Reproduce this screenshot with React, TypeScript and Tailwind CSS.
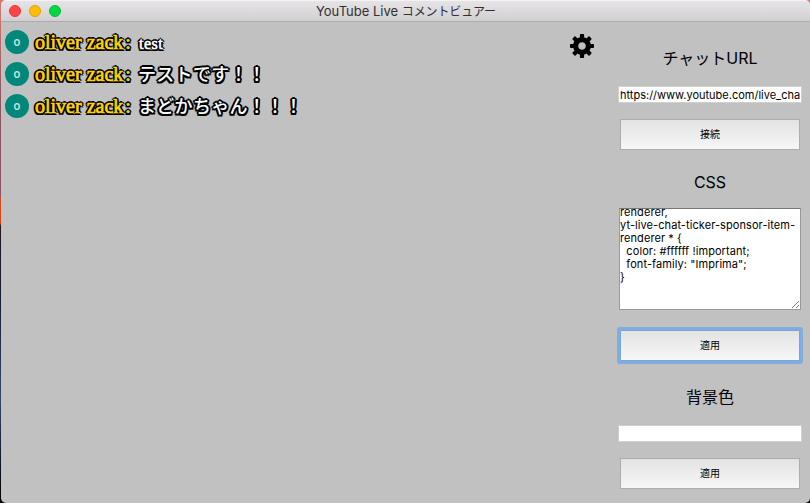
import React from 'react';

const kana = "font-['Noto_Sans_CJK_JP',sans-serif] text-[18px] tracking-[0.3px] font-medium -mt-0.5";

const comments = [
  { id: 1, body: 'test', style: "font-['Liberation_Serif',serif] text-[16px] tracking-[0.5px] mt-[3px] ml-px [-webkit-text-stroke:0.6px_#fff]" },
  { id: 2, body: 'テストです！！', style: kana },
  { id: 3, body: 'まどかちゃん！！！', style: kana },
];

const outline = '[text-shadow:2px_0_#000,-2px_0_#000,0_2px_#000,0_-2px_#000,1.5px_1.5px_#000,-1.5px_1.5px_#000,1.5px_-1.5px_#000,-1.5px_-1.5px_#000,1px_0_#000,-1px_0_#000,0_1px_#000,0_-1px_#000]';

const cssLines = [
  'renderer,',
  'yt-live-chat-ticker-sponsor-item-',
  'renderer * {',
  '  color: #ffffff !important;',
  '  font-family: "Imprima";',
  '}',
];

function Gear() {
  return (
    <svg viewBox="-12 -12 24 24" className="mt-3 h-6 w-6 shrink-0">
      <circle r="6.4" fill="none" stroke="#000" strokeWidth="5.2" />
      {[0, 45, 90, 135, 180, 225, 270, 315].map((a) => (
        <rect key={a} x="-2.1" y="-12" width="4.2" height="5" rx="0.8" transform={`rotate(${a})`} />
      ))}
    </svg>
  );
}

function Comment({ body, style }: { body: string; style: string }) {
  return (
    <div className="flex h-8 items-center">
      <div className="flex h-6 w-6 shrink-0 items-center justify-center rounded-full bg-[#00897b] font-['Roboto',sans-serif] leading-none text-[#c5e5e1]">
        <span className="text-[12px] font-medium">o</span>
      </div>
      <span className={`ml-1.5 w-[103px] whitespace-nowrap font-['Liberation_Serif',serif] text-[20px] leading-8 text-[#ffd600] [-webkit-text-stroke:0.7px_#ffd600] ${outline}`}>
        oliver zack<span className="ml-0.5">:</span>
      </span>
      <span className={`whitespace-nowrap leading-8 text-white ${style} ${outline}`}>{body}</span>
    </div>
  );
}

function ActionButton({ label, focused = false }: { label: string; focused?: boolean }) {
  return (
    <button className={`mx-auto block h-[31px] w-[180px] border bg-linear-to-b from-[#e3e3e3] to-[#f6f6f6] pb-px text-center text-[10px] leading-none text-black ${focused ? 'rounded-[1px] border-[#78a6d8] ring-3 ring-[#80addf]' : 'border-[#adadad]'}`}>
      {label}
    </button>
  );
}

export default function App() {
  return (
    <div className="h-[503px] w-[810px] overflow-hidden bg-[linear-gradient(#d8796f_0,#8b5560_100px,#8b5560_195px,#d84a20_200px,#e04010_223px,#201820_226px,#142033_300px,#35476a_400px,#101828_460px,#000_503px)] pl-px font-['Inter','Noto_Sans_CJK_JP',sans-serif] text-black">
      <div className="flex h-full flex-col overflow-hidden rounded-[5px] bg-[#c1c1c1]">
        <header className="flex h-[22px] shrink-0 items-center border-t border-b border-t-[#f3f3f3] border-b-[#acacac] bg-linear-to-b from-[#e6e4e6] to-[#d1cfd1] pl-2">
          <div className="flex gap-2">
            <i className="h-3 w-3 rounded-full border border-[#e5393e] bg-[#ff4448]" />
            <i className="h-3 w-3 rounded-full border border-[#e0a000] bg-[#ffbd05]" />
            <i className="h-3 w-3 rounded-full border border-[#06b93c] bg-[#00d742]" />
          </div>
          <h1 className="ml-[255px] whitespace-nowrap text-[13px] leading-5 text-[#303030]">YouTube Live <span className="text-[12px] tracking-[-0.1px]">コメントビュアー</span></h1>
        </header>
        <div className="flex min-h-0 flex-1">
          <main className="flex w-[593px] shrink-0 justify-between">
            <section className="pt-1 pl-1">
              {comments.map((c) => <Comment key={c.id} body={c.body} style={c.style} />)}
            </section>
            <Gear />
          </main>
          <aside className="ml-6 w-[184px] pt-6">
            <h2 className="h-6 text-center text-[16px] leading-6">チャットURL</h2>
            <input readOnly value="https://www.youtube.com/live_chat" className="mt-4 block h-[17px] w-full border border-[#d0d0d0] bg-white px-px text-[11px] leading-[15px] outline-none" />
            <div className="mt-4"><ActionButton label="接続" /></div>
            <h2 className="mt-5 h-6 text-center text-[16px] leading-6">CSS</h2>
            <div className="relative mx-auto mt-[14px] h-[102px] w-[182px] overflow-hidden border border-[#999] border-t-[#777] bg-white">
              <pre className="-mt-[3px] font-['Inter',sans-serif] text-[11px] leading-[13px] tracking-[0.08px]">
                {cssLines.map((line) => <div key={line}>{line}</div>)}
              </pre>
              <svg className="absolute right-px bottom-px h-2 w-2" viewBox="0 0 8 8" stroke="#555" strokeWidth="0.8"><path d="M1 8 8 1M5 8l3-3" /></svg>
            </div>
            <div className="mt-5"><ActionButton label="適用" focused /></div>
            <h2 className="mt-6 h-6 text-center text-[16px] leading-6">背景色</h2>
            <input readOnly value="" className="mt-4 block h-[17px] w-full border border-[#d0d0d0] bg-white outline-none" />
            <div className="mt-4"><ActionButton label="適用" /></div>
          </aside>
        </div>
      </div>
    </div>
  );
}
